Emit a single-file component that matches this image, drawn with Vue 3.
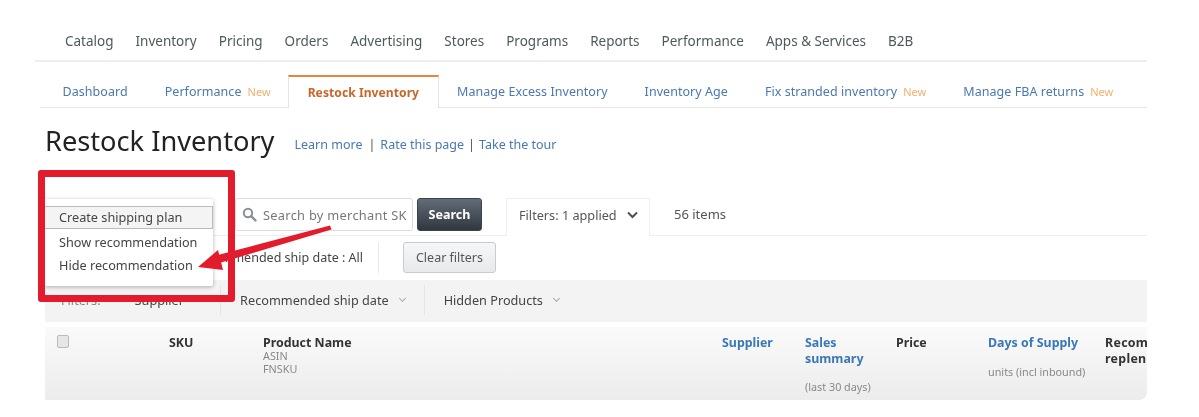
<template>
  <div class="page">
    <div class="shot">
      <nav class="top-nav">
        <a v-for="item in topNav" :key="item">{{ item }}</a>
      </nav>

      <div class="sub-tabs">
        <a v-for="tab in subTabs" :key="tab.label" class="sub-tab" :class="{ active: tab.active }">
          {{ tab.label }}<span v-if="tab.isNew" class="new">New</span>
        </a>
      </div>

      <div class="content">
        <div class="title-row">
          <h1>Restock Inventory</h1>
          <div class="title-links">
            <a>Learn more</a><span class="sep first">|</span><a>Rate this page</a><span class="sep">|</span><a>Take the tour</a>
          </div>
        </div>

        <div class="toolbar">
          <div class="search-box">
            <svg width="15" height="15" viewBox="0 0 15 15">
              <circle cx="6" cy="6" r="4.2" fill="none" stroke="#8a8f94" stroke-width="2" />
              <path d="M9.2 9.2 L13.5 13.5" stroke="#8a8f94" stroke-width="2.4" stroke-linecap="round" />
            </svg>
            <span>Search by merchant SK</span>
          </div>
          <button class="search-btn">Search</button>
          <div class="filters-tab">
            <span>Filters: 1 applied</span>
            <svg width="11" height="8" viewBox="0 0 11 8">
              <path d="M1 1.5 L5.5 6 L10 1.5" fill="none" stroke="#4a5157" stroke-width="2" />
            </svg>
          </div>
          <span class="count">56 items</span>
        </div>

        <div class="applied-row">
          <span class="applied">Recommended ship date : All</span>
          <button class="clear-btn">Clear filters</button>
        </div>

        <div class="filter-bar">
          <span class="filter-label">Filters:</span>
          <span class="filter-supplier">Supplier</span>
          <span class="filter-item">Recommended ship date<i class="caret"></i></span>
          <span class="filter-item">Hidden Products<i class="caret"></i></span>
        </div>

        <div class="table-head">
          <div><span class="checkbox"></span></div>
          <div class="th">SKU</div>
          <div class="th">Product Name<small class="asin">ASIN</small><small>FNSKU</small></div>
          <div class="th link">Supplier</div>
          <div class="th link">Sales<br>summary<small class="days">(last 30 days)</small></div>
          <div class="th">Price</div>
          <div class="th link">Days of Supply<small class="units">units (incl inbound)</small></div>
          <div class="th clip">Recommended replenishment</div>
        </div>
      </div>

      <div class="menu">
        <div class="menu-item selected">Create shipping plan</div>
        <div class="menu-item">Show recommendation</div>
        <div class="menu-item">Hide recommendation</div>
      </div>
      <div class="red-box"></div>
      <svg class="arrow" width="150" height="60" viewBox="190 220 150 60">
        <path d="M330 225.5 L331.5 229.5 L216 264 L214 256 Z" fill="#e31c2d" />
        <path d="M198 267 L218 250 L223 270 Z" fill="#e31c2d" />
      </svg>
    </div>
  </div>
</template>

<script setup>
const topNav = ['Catalog', 'Inventory', 'Pricing', 'Orders', 'Advertising', 'Stores', 'Programs', 'Reports', 'Performance', 'Apps & Services', 'B2B']

const subTabs = [
  { label: 'Dashboard' },
  { label: 'Performance', isNew: true },
  { label: 'Restock Inventory', active: true },
  { label: 'Manage Excess Inventory' },
  { label: 'Inventory Age' },
  { label: 'Fix stranded inventory', isNew: true },
  { label: 'Manage FBA returns', isNew: true }
]
</script>

<style>
html, body {
  margin: 0;
  background: #fff;
}
</style>

<style scoped>
.page {
  width: 1199px;
  height: 417px;
  overflow: hidden;
  background: #fff;
}

.shot {
  position: relative;
  width: 1199px;
  height: 417px;
  font-family: "Noto Sans", "Liberation Sans", sans-serif;
  font-size: 13px;
  color: #444;
  filter: blur(0.4px);
}

.top-nav {
  display: flex;
  gap: 22px;
  margin-left: 35px;
  width: 1082px;
  padding: 32px 0 10px 30px;
  border-bottom: 2px solid #eee;
  font-size: 13.5px;
  line-height: 18px;
  color: #4c5a5c;
}

.sub-tabs {
  display: flex;
  margin: 13px 0 0 40px;
  width: 1103px;
  height: 32px;
  border-bottom: 1px solid #e7e7e7;
  padding-left: 4px;
}

.sub-tab {
  display: flex;
  align-items: center;
  padding: 0 18.5px;
  font-size: 12.5px;
  letter-spacing: 0.05px;
  color: #4a78b0;
  white-space: nowrap;
}

.sub-tab.active {
  margin: 0 0 -1px -1px;
  background: #fff;
  border-top: 2px solid #e3873c;
  border-left: 1px solid #e4e4e4;
  border-right: 1px solid #e4e4e4;
  font-size: 12.1px;
  font-weight: 700;
  color: #c7662a;
}

.new {
  margin-left: 6px;
  font-size: 11px;
  color: #f2b06a;
}

.content {
  margin-left: 45px;
  width: 1102px;
}

.title-row {
  display: flex;
  align-items: center;
  margin-top: 16px;
  height: 33px;
}

h1 {
  margin: 0;
  font-size: 27.2px;
  font-weight: 400;
  line-height: 33px;
  color: #222;
}

.title-links {
  margin: 8px 0 0 20px;
  font-size: 12.5px;
  color: #4a78b0;
}

.sep {
  margin: 0 4px;
  color: #555;
}

.sep.first {
  margin: 0 5px 0 6px;
}

.toolbar {
  display: flex;
  align-items: flex-start;
  height: 37px;
  margin-top: 41px;
  padding-left: 190px;
  border-bottom: 1px solid #eee;
}

.search-box {
  display: flex;
  align-items: center;
  gap: 6px;
  box-sizing: border-box;
  width: 178px;
  height: 33px;
  padding-left: 6px;
  border: 1px solid #ddd;
  border-radius: 3px;
  font-size: 12.8px;
  letter-spacing: 0.3px;
  color: #777;
  white-space: nowrap;
  overflow: hidden;
}

.search-btn {
  width: 65px;
  height: 33px;
  margin-left: 4px;
  padding: 0;
  border: 1px solid #3c434b;
  border-radius: 3px;
  background: linear-gradient(#626c77, #30373f);
  font-family: inherit;
  font-size: 12.5px;
  font-weight: 700;
  color: #fff;
}

.filters-tab {
  display: flex;
  align-items: center;
  justify-content: space-between;
  box-sizing: border-box;
  width: 144px;
  height: 38px;
  margin-left: 24px;
  padding: 0 11px 6px 12px;
  background: #fff;
  border: 1px solid #eee;
  border-bottom: 0;
  font-size: 12.7px;
  color: #555;
}

.count {
  margin: 7px 0 0 24px;
  font-size: 13px;
  color: #555;
}

.applied-row {
  display: flex;
  align-items: center;
  height: 31px;
  margin-top: 6px;
  padding-left: 145px;
}

.applied {
  box-sizing: border-box;
  width: 189px;
  padding-right: 15px;
  border-right: 1px solid #e7e7e7;
  font-size: 12.5px;
  line-height: 30px;
  color: #444;
  white-space: nowrap;
  text-align: right;
}

.clear-btn {
  width: 93px;
  height: 31px;
  margin-left: 24px;
  padding: 0;
  border: 1px solid #c9cccc;
  border-radius: 3px;
  background: linear-gradient(#f6f7f8, #e8e9ea);
  font-family: inherit;
  font-size: 12.5px;
  color: #555;
}

.filter-bar {
  display: flex;
  align-items: center;
  height: 42px;
  margin-top: 7px;
  padding-bottom: 2px;
  box-sizing: border-box;
  background: #f3f3f3;
  font-size: 12.7px;
  color: #444;
}

.filter-label {
  margin-left: 16px;
  color: #888;
}

.filter-supplier {
  margin-left: 34px;
  width: 85.5px;
}

.filter-item {
  display: flex;
  align-items: center;
  height: 30px;
  padding: 0 19px;
  border-left: 1px solid #e4e4e4;
  white-space: nowrap;
}

.caret {
  width: 4px;
  height: 4px;
  margin: -3px 0 0 11px;
  border-right: 1px solid #aaa;
  border-bottom: 1px solid #aaa;
  transform: rotate(45deg);
}

.table-head {
  display: grid;
  grid-template-columns: 124px 94px 459px 83px 91px 92px 117px 42px;
  box-sizing: border-box;
  height: 73px;
  margin-top: 5px;
  padding-top: 8px;
  background: linear-gradient(#fafafa, #ececec);
  border-bottom-right-radius: 8px;
  overflow: hidden;
}

.checkbox {
  display: block;
  width: 10px;
  height: 11px;
  margin: 0 0 0 12px;
  background: #e6e6e6;
  border: 1px solid #bbb;
  border-radius: 2px;
}

.th {
  font-size: 12.4px;
  font-weight: 700;
  line-height: 16px;
  color: #333;
}

.th small {
  display: block;
  font-size: 10.8px;
  font-weight: 400;
  line-height: 13px;
  color: #888;
}

.th.link {
  color: #3a78b8;
}

.th small.asin {
  margin-top: -2px;
}

.th small.days {
  margin-top: 13px;
}

.th small.units {
  margin-top: 14px;
}

.th.clip {
  overflow: hidden;
  letter-spacing: 0.3px;
}

.menu {
  position: absolute;
  left: 45px;
  top: 199px;
  box-sizing: border-box;
  width: 168px;
  height: 87px;
  padding-top: 7px;
  background: #fff;
  box-shadow: 0 1px 4px rgba(0, 0, 0, 0.3);
  border-radius: 2px;
  font-size: 12.7px;
  color: #444;
}

.menu-item {
  height: 23px;
  padding-left: 14px;
  line-height: 23px;
}

.menu-item.selected {
  box-sizing: border-box;
  margin-bottom: 2px;
  background: #f4f4f4;
  border-top: 1px solid #bbb;
  border-bottom: 1px solid #bbb;
  border-right: 1px solid #bbb;
  line-height: 21px;
}

.red-box {
  position: absolute;
  left: 38px;
  top: 170px;
  box-sizing: border-box;
  width: 197px;
  height: 132px;
  border: 7px solid #e31c2d;
  border-radius: 3px;
}

.arrow {
  position: absolute;
  left: 190px;
  top: 220px;
}
</style>
